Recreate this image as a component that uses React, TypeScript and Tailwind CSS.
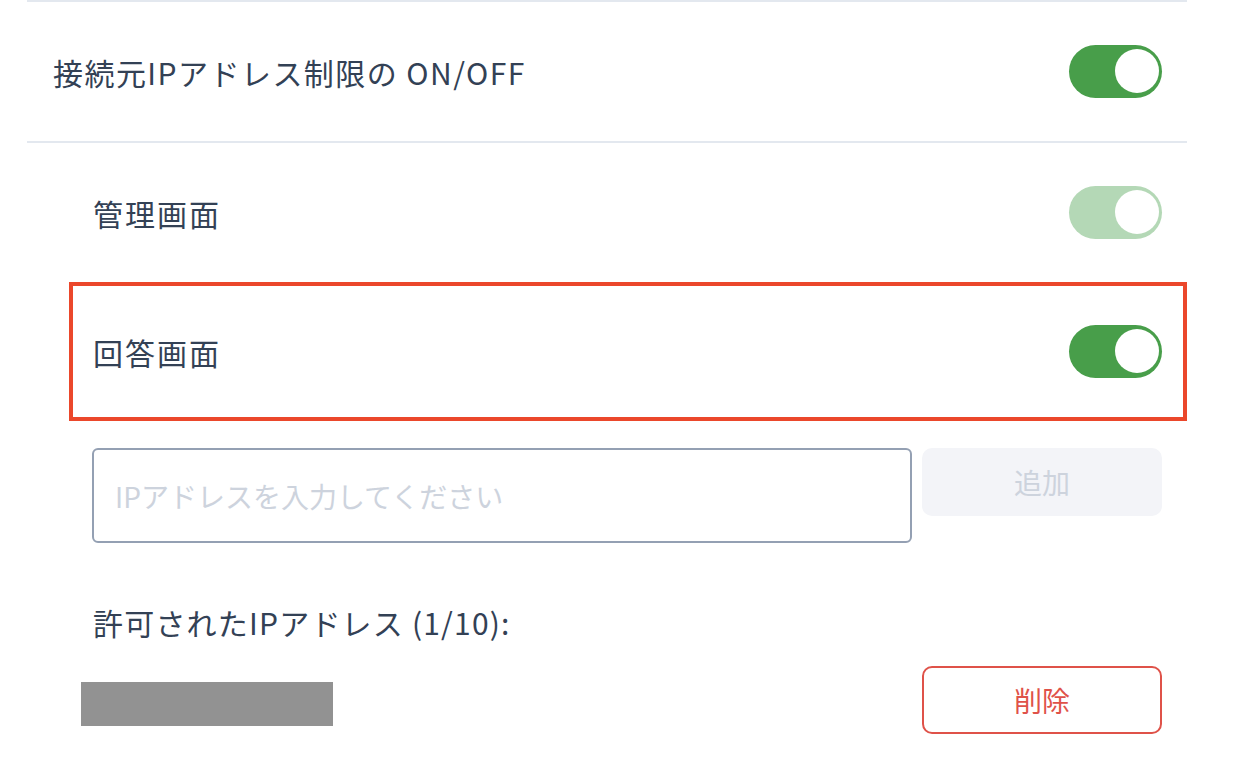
import React from "react";

function Toggle({ light }: { light?: boolean }) {
  return (
    <div
      className={
        light
          ? "relative w-[93px] h-[53px] rounded-full bg-[#b4d8b6] shrink-0"
          : "relative w-[93px] h-[53px] rounded-full bg-[#489e4a] shrink-0"
      }
    >
      <div className="absolute top-[4px] right-[3px] w-[44px] h-[44px] rounded-full bg-white" />
    </div>
  );
}

export default function App() {
  return (
    <div
      className="w-[1240px] h-[778px] bg-white overflow-hidden text-[#334155]"
      style={{ fontFamily: '"Noto Sans CJK JP", "Noto Sans", sans-serif' }}
    >
      <div className="ml-[27px] w-[1160px] border-t-2 border-b-2 border-[#e3e8ef]">
        <div className="flex items-center justify-between h-[139px] pl-[26px] pr-[25px]">
          <span className="text-[30px] leading-[40px] tracking-[1.45px]">
            接続元IPアドレス制限の ON/OFF
          </span>
          <Toggle />
        </div>
      </div>

      <div className="ml-[69px] w-[1118px] flex flex-col">
        <div className="flex items-center justify-between h-[139px] pl-[24px] pr-[25px]">
          <span className="text-[30px] leading-[40px] tracking-[2px]">管理画面</span>
          <Toggle light />
        </div>

        <div className="flex items-center justify-between h-[139px] border-4 border-[#eb472b] pl-[20px] pr-[21px]">
          <span className="text-[30px] leading-[40px] tracking-[2px]">回答画面</span>
          <Toggle />
        </div>

        <div className="mt-[27px] flex items-start gap-[10px] pl-[23px] pr-[25px]">
          <div className="w-[820px] h-[95px] border-2 border-[#94a0b3] rounded-[6px] flex items-center pl-[21px]">
            <span className="text-[28px] leading-[40px] text-[#cdd3dd]">
              IPアドレスを入力してください
            </span>
          </div>
          <div className="flex-1 h-[68px] rounded-[10px] bg-[#f3f4f8] flex items-center justify-center">
            <span className="text-[28px] leading-[40px] text-[#cdd3dd]">追加</span>
          </div>
        </div>

        <div className="mt-[59px] pl-[24px]">
          <span className="text-[30px] leading-[40px] tracking-[1.2px]">
            許可されたIPアドレス (1/10):
          </span>
        </div>

        <div className="mt-[24px] flex items-start justify-between pr-[25px]">
          <div className="ml-[12px] mt-[16px] w-[252px] h-[44px] bg-[#929292]" />
          <div className="w-[240px] h-[68px] border-2 border-[#df5249] rounded-[10px] flex items-center justify-center">
            <span className="text-[28px] leading-[40px] text-[#df5249]">削除</span>
          </div>
        </div>
      </div>
    </div>
  );
}
